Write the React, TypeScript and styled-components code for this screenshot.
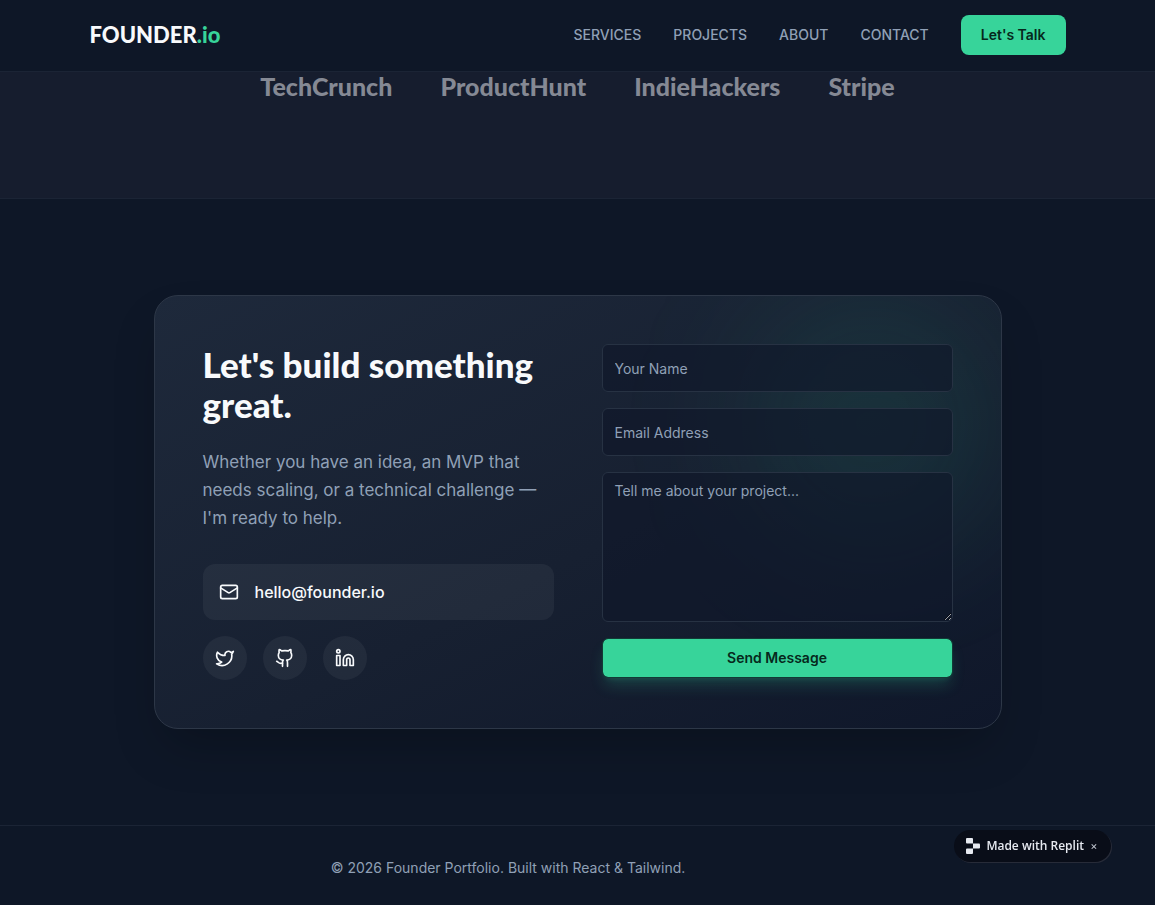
import React from 'react';
import styled, { createGlobalStyle, ThemeProvider } from 'styled-components';
import { Github, Linkedin, Mail, Twitter } from 'lucide-react';

const theme = {
  page: '#0e1727',
  band: '#161d2e',
  line: '#1b2435',
  text: '#f8fafc',
  muted: '#90a0b6',
  primary: '#37d49a',
  onPrimary: '#06281c',
  display: 'Lato, "Liberation Sans", sans-serif',
  body: 'Inter, "Liberation Sans", sans-serif',
};

const GlobalStyle = createGlobalStyle`
  *, *::before, *::after { box-sizing: border-box; }
  body {
    margin: 0;
    background: ${theme.page};
    color: ${theme.text};
    font-family: ${theme.body};
    font-size: 16px;
    line-height: 24px;
  }
  h2, p { margin: 0; }
  a { color: inherit; text-decoration: none; }
  button, input, textarea { font: inherit; }
`;

const Header = styled.header`
  position: sticky;
  top: 0;
  z-index: 10;
  background: ${(p) => p.theme.page};
  border-bottom: 1px solid ${(p) => p.theme.line};
`;

const HeaderInner = styled.div`
  max-width: 1024px;
  margin: 0 auto;
  padding: 15px 24px 16px;
  display: flex;
  align-items: center;
  justify-content: space-between;
`;

const Logo = styled.a`
  font-family: ${(p) => p.theme.display};
  font-size: 22px;
  font-weight: 900;
  line-height: 32px;
`;

const Accent = styled.span`
  color: ${(p) => p.theme.primary};
`;

const Nav = styled.nav`
  display: flex;
  align-items: center;
  gap: 32px;
`;

const NavLink = styled.a`
  font-size: 14px;
  font-weight: 500;
  line-height: 20px;
  text-transform: uppercase;
  color: ${(p) => p.theme.muted};
`;

const TalkButton = styled.button`
  height: 40px;
  padding: 0 20px;
  border: 0;
  border-radius: 8px;
  background: ${(p) => p.theme.primary};
  color: ${(p) => p.theme.onPrimary};
  font-size: 14px;
  font-weight: 600;
  line-height: 20px;
  cursor: pointer;
`;

const PressBand = styled.section`
  display: flex;
  flex-wrap: wrap;
  justify-content: center;
  gap: 0 48px;
  padding-bottom: 98px;
  background: ${(p) => p.theme.band};
  border-bottom: 1px solid ${(p) => p.theme.line};
`;

const PressName = styled.span`
  font-family: ${(p) => p.theme.display};
  font-size: 25px;
  font-weight: 900;
  line-height: 28px;
  color: #858994;
`;

const Contact = styled.section`
  max-width: 896px;
  margin: 0 auto;
  padding: 96px 24px;
`;

const Card = styled.div`
  position: relative;
  isolation: isolate;
  overflow: clip;
  display: grid;
  grid-template-columns: repeat(auto-fit, minmax(280px, 1fr));
  gap: 48px;
  padding: 48px;
  border: 1px solid #2d3747;
  border-radius: 24px;
  background: linear-gradient(to bottom right, #1e293b, #172031 55%, #0f172a);
  box-shadow: 0 25px 50px -12px rgba(0, 0, 0, 0.25);
`;

const Glow = styled.div`
  position: absolute;
  z-index: -1;
  top: 0;
  right: 0;
  width: 256px;
  height: 256px;
  border-radius: 50%;
  background: rgba(52, 211, 153, 0.1);
  filter: blur(64px);
`;

const Pitch = styled.div`
  min-width: 0;
`;

const Title = styled.h2`
  font-family: ${(p) => p.theme.display};
  font-size: 35px;
  font-weight: 900;
  line-height: 40px;
  margin-bottom: 24px;
`;

const Lead = styled.p`
  font-size: 17px;
  line-height: 28px;
  color: ${(p) => p.theme.muted};
  margin-bottom: 32px;
`;

const EmailLink = styled.a`
  display: flex;
  align-items: center;
  gap: 16px;
  padding: 16px;
  margin-bottom: 16px;
  border-radius: 12px;
  background: rgba(255, 255, 255, 0.05);
  font-weight: 500;
`;

const Socials = styled.div`
  display: flex;
  gap: 16px;
`;

const SocialLink = styled.a`
  display: flex;
  padding: 12px;
  border-radius: 50%;
  background: rgba(255, 255, 255, 0.05);
`;

const Form = styled.form`
  display: flex;
  flex-direction: column;
  gap: 16px;
  min-width: 0;
`;

const Field = styled.input`
  width: 100%;
  height: 48px;
  padding: 8px 12px;
  border: 1px solid #273243;
  border-radius: 6px;
  background: rgba(15, 23, 42, 0.65);
  color: ${(p) => p.theme.text};
  font-size: 14px;
  line-height: 20px;
  &::placeholder { color: ${(p) => p.theme.muted}; opacity: 1; }
`;

const MessageField = styled(Field).attrs({ as: 'textarea' })`
  display: block;
  height: 150px;
  resize: vertical;
`;

const SendButton = styled.button`
  height: 40px;
  border: 1px solid #123a35;
  border-radius: 6px;
  background: ${(p) => p.theme.primary};
  background-clip: padding-box;
  color: ${(p) => p.theme.onPrimary};
  font-size: 14px;
  font-weight: 600;
  line-height: 20px;
  box-shadow: 0 10px 15px -3px rgba(52, 211, 153, 0.2), 0 4px 6px -4px rgba(52, 211, 153, 0.2);
  cursor: pointer;
`;

const Footer = styled.footer`
  padding: 32px 139px 26px 0;
  border-top: 1px solid ${(p) => p.theme.line};
  text-align: center;
  font-size: 14px;
  line-height: 20px;
  color: ${(p) => p.theme.muted};
`;

const Badge = styled.div`
  position: fixed;
  right: 44px;
  bottom: 43px;
  z-index: 20;
  display: flex;
  align-items: center;
  height: 32px;
  padding: 0 12px;
  border-radius: 16px;
  background: #090d18;
  box-shadow: 1px 1px 0 #272b38;
`;

const BadgeLink = styled.a`
  display: flex;
  align-items: center;
  gap: 6px;
  font-family: "Open Sans", "Liberation Sans", sans-serif;
  font-size: 12px;
  font-weight: 600;
  line-height: 16px;
  white-space: nowrap;
  color: #e6e9f0;
`;

const BadgeClose = styled.button`
  margin-left: 5px;
  padding: 0;
  width: 10px;
  border: 0;
  background: none;
  color: #c3c8d2;
  font-size: 11px;
  line-height: 16px;
  cursor: pointer;
`;

const press = ['TechCrunch', 'ProductHunt', 'IndieHackers', 'Stripe'];
const links = ['Services', 'Projects', 'About', 'Contact'];
const socials = [
  { label: 'Twitter', Icon: Twitter },
  { label: 'GitHub', Icon: Github },
  { label: 'LinkedIn', Icon: Linkedin },
];

export default function App() {
  return (
    <ThemeProvider theme={theme}>
      <GlobalStyle />
      <Header>
        <HeaderInner>
          <Logo href="#top">FOUNDER<Accent>.io</Accent></Logo>
          <Nav>
            {links.map((name) => (
              <NavLink key={name} href={`#${name.toLowerCase()}`}>{name}</NavLink>
            ))}
            <TalkButton type="button">Let's Talk</TalkButton>
          </Nav>
        </HeaderInner>
      </Header>
      <main>
        <PressBand>
          {press.map((name) => <PressName key={name}>{name}</PressName>)}
        </PressBand>
        <Contact id="contact">
          <Card>
            <Glow />
            <Pitch>
              <Title>Let's build something great.</Title>
              <Lead>
                Whether you have an idea, an MVP that needs scaling, or a technical challenge — I'm
                ready to help.
              </Lead>
              <EmailLink href="mailto:hello@founder.io">
                <Mail size={20} />
                hello@founder.io
              </EmailLink>
              <Socials>
                {socials.map(({ label, Icon }) => (
                  <SocialLink key={label} href={`#${label.toLowerCase()}`} aria-label={label}>
                    <Icon size={20} />
                  </SocialLink>
                ))}
              </Socials>
            </Pitch>
            <Form onSubmit={(e) => e.preventDefault()}>
              <Field type="text" aria-label="Your Name" placeholder="Your Name" />
              <Field type="email" aria-label="Email Address" placeholder="Email Address" />
              <MessageField aria-label="Tell me about your project" placeholder="Tell me about your project..." />
              <SendButton type="submit">Send Message</SendButton>
            </Form>
          </Card>
        </Contact>
      </main>
      <Footer>© 2026 Founder Portfolio. Built with React &amp; Tailwind.</Footer>
      <Badge>
        <BadgeLink href="#replit">
          <svg width="14" height="16" viewBox="0 0 14 16" fill="currentColor" aria-hidden="true">
            <path d="M1 0h5a1 1 0 0 1 1 1v4.4H1a1 1 0 0 1-1-1V1a1 1 0 0 1 1-1Z" />
            <path d="M7 5.4h6a1 1 0 0 1 1 1v3.2a1 1 0 0 1-1 1H7Z" />
            <path d="M1 10.6h6V15a1 1 0 0 1-1 1H1a1 1 0 0 1-1-1v-3.4a1 1 0 0 1 1-1Z" />
          </svg>
          Made with Replit
        </BadgeLink>
        <BadgeClose type="button" aria-label="Dismiss">×</BadgeClose>
      </Badge>
    </ThemeProvider>
  );
}
